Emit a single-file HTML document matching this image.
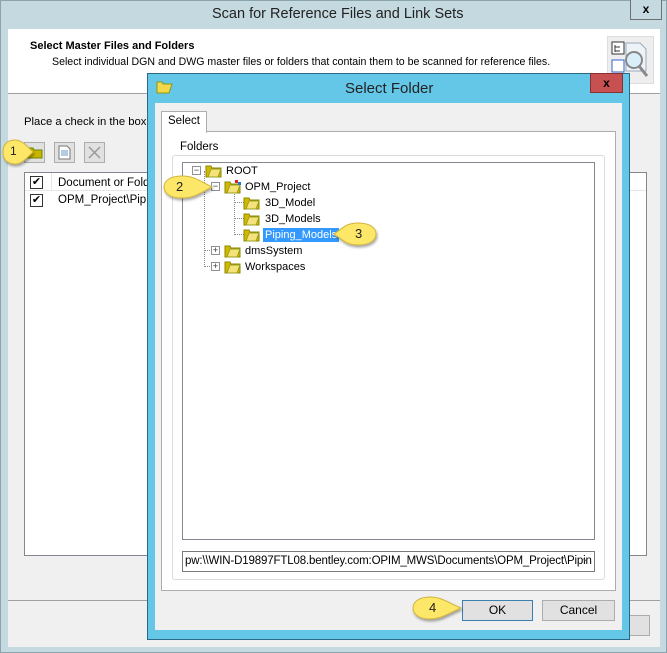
<!DOCTYPE html>
<html><head><style>
*{box-sizing:border-box;margin:0;padding:0}
body{width:667px;height:653px;position:relative;overflow:hidden;background:#c4d9e0;font-family:"Liberation Sans",sans-serif;font-size:11px;color:#000}
.a{position:absolute}
.t{white-space:nowrap}
.fold{position:absolute;width:17px;height:14px}
.exp{position:absolute;width:9px;height:9px;border:1px solid #919191;background:#fff;font-size:9px;line-height:7px;text-align:center;color:#333}
.btn{position:absolute;background:#e1e1e1;border:1px solid #adadad;text-align:center;font-size:12px;line-height:19px}
.tr{font-size:11px}
.cn{position:absolute;font-size:13px;color:#222}
</style></head><body>
<div class="a" style="left:0;top:0;width:667px;height:653px;border:1px solid #8aa3ad"></div>
<div class="a t" style="left:212px;top:6px;font-size:14.5px;color:#222">Scan for Reference Files and Link Sets</div>
<div class="a" style="left:630px;top:0;width:32px;height:20px;border:1px solid #707070;border-top:none;background:#c4d9e0;text-align:center;font-weight:bold;font-size:12px;line-height:18px">x</div>
<div class="a" style="left:8px;top:29px;width:652px;height:618px;background:#f0f0f0"></div>
<div class="a" style="left:8px;top:29px;width:652px;height:65px;background:#fff;border-bottom:1px solid #a0a0a0"></div>
<div class="a t" style="left:30px;top:40px;font-weight:bold;font-size:11px">Select Master Files and Folders</div>
<div class="a t" style="left:52px;top:56px;font-size:10.6px">Select individual DGN and DWG master files or folders that contain them to be scanned for reference files.</div>
<div class="a" style="left:607px;top:36px;width:47px;height:48px;background:#eee;border:1px solid #ddd"></div>
<svg class="a" style="left:609px;top:38px" width="44" height="44"><rect x="3" y="4" width="12" height="12" fill="#fff" stroke="#333"/><path d="M6 7v7M6 9h5M6 13h5" stroke="#333"/><rect x="3" y="22" width="12" height="12" fill="#fff" stroke="#36c"/><path d="M17 5h14l6 6v22h-20z" fill="#eef3f8" stroke="#9ab"/><circle cx="25" cy="22" r="8" fill="#d9eef8" stroke="#888" stroke-width="2"/><path d="M30 28l8 10" stroke="#888" stroke-width="3"/></svg>
<div class="a t" style="left:24px;top:116px;font-size:11.3px">Place a check in the box n</div>
<div class="a" style="left:24px;top:142px;width:21px;height:21px;border:1px solid #adadad;background:#e1e1e1"></div>
<svg class="a" style="left:27px;top:146px" width="16" height="13"><path d="M1 2h5l1 2h8v8H1z" fill="#c9b400" stroke="#6a8a00"/></svg>
<div class="a" style="left:54px;top:142px;width:21px;height:21px;border:1px solid #adadad;background:#e1e1e1"></div>
<svg class="a" style="left:58px;top:145px" width="14" height="15"><path d="M1 1h8l3 3v10H1z" fill="#fff" stroke="#777"/><path d="M3 6h7M3 8h7M3 10h7" stroke="#69c"/></svg>
<div class="a" style="left:84px;top:142px;width:21px;height:21px;border:1px solid #adadad;background:#e1e1e1"></div>
<svg class="a" style="left:87px;top:145px" width="15" height="15"><path d="M2 2l11 11M13 2L2 13" stroke="#999" stroke-width="1.5"/></svg>
<div class="a" style="left:24px;top:172px;width:623px;height:384px;background:#fff;border:1px solid #828790"></div>
<div class="a" style="left:25px;top:173px;width:621px;height:18px;border-bottom:1px solid #e5e5e5"></div>
<div class="a" style="left:51px;top:173px;width:1px;height:18px;background:#e5e5e5"></div>
<div class="a" style="left:30px;top:176px;width:13px;height:13px;border:1px solid #333;font-size:11px;line-height:10px;text-align:center">✔</div>
<div class="a" style="left:30px;top:194px;width:13px;height:13px;border:1px solid #333;font-size:11px;line-height:10px;text-align:center">✔</div>
<div class="a t" style="left:58px;top:177px;font-size:11.5px">Document or Folde</div>
<div class="a t" style="left:58px;top:194px;font-size:11.5px">OPM_Project\Pipin</div>
<div class="a" style="left:8px;top:600px;width:652px;height:1px;background:#a0a0a0"></div>
<div class="btn" style="left:600px;top:615px;width:50px;height:21px"></div>

<div class="a" style="left:147px;top:73px;width:483px;height:567px;background:#65c7e8;border:1px solid #2a6a86"></div>
<svg class="a" style="left:156px;top:80px" width="17" height="14"><path d="M1 2h5l1 2h9l-3 9H1z" fill="#f2d84a" stroke="#8a9a10"/></svg>
<div class="a t" style="left:345px;top:80px;font-size:15px;color:#222">Select Folder</div>
<div class="a" style="left:590px;top:73px;width:33px;height:20px;background:#c75050;border:1px solid #8a3030;text-align:center;font-weight:bold;font-size:12px;line-height:18px">x</div>
<div class="a" style="left:155px;top:103px;width:467px;height:527px;background:#f0f0f0"></div>
<div class="a" style="left:161px;top:131px;width:455px;height:460px;background:#fff;border:1px solid #adadad"></div>
<div class="a" style="left:161px;top:111px;width:46px;height:22px;background:#fff;border:1px solid #adadad;border-bottom:none"></div>
<div class="a t" style="left:168px;top:115px;font-size:11.5px">Select</div>
<div class="a" style="left:172px;top:155px;width:433px;height:425px;border:1px solid #dcdcdc;border-radius:3px"></div>
<div class="a t" style="left:177px;top:141px;font-size:11.5px;background:#fff;padding:0 3px">Folders</div>
<div class="a" style="left:182px;top:162px;width:413px;height:378px;background:#fff;border:1px solid #828790"></div>
<div class="a" style="left:204px;top:171px;border-left:1px dotted #888;height:96px"></div>
<div class="a" style="left:204px;top:266px;border-top:1px dotted #888;width:10px"></div>
<div class="a" style="left:204px;top:250px;border-top:1px dotted #888;width:10px"></div>
<div class="a" style="left:204px;top:186px;border-top:1px dotted #888;width:10px"></div>
<div class="a" style="left:234px;top:192px;border-left:1px dotted #888;height:43px"></div>
<div class="a" style="left:234px;top:202px;border-top:1px dotted #888;width:10px"></div>
<div class="a" style="left:234px;top:218px;border-top:1px dotted #888;width:10px"></div>
<div class="a" style="left:234px;top:234px;border-top:1px dotted #888;width:10px"></div>
<div class="exp" style="left:192px;top:166px">−</div>
<div class="exp" style="left:211px;top:182px">−</div>
<div class="exp" style="left:211px;top:246px">+</div>
<div class="exp" style="left:211px;top:262px">+</div>
<svg width="0" height="0" style="position:absolute"><defs><symbol id="f" viewBox="0 0 17 14"><path d="M1 2h5l1 2h9v9H1z" fill="#d4b800" stroke="#8a8a00"/><path d="M3 13l3-8h10l-3 8z" fill="#f5e27a" stroke="#9aa020"/></symbol></defs></svg>
<svg class="fold" style="left:205px;top:164px"><use href="#f"/></svg>
<svg class="fold" style="left:224px;top:180px"><use href="#f"/><rect x="11" y="0" width="3" height="3" fill="#d22"/><rect x="14" y="2" width="3" height="3" fill="#27c"/></svg>
<svg class="fold" style="left:243px;top:196px"><use href="#f"/></svg>
<svg class="fold" style="left:243px;top:212px"><use href="#f"/></svg>
<svg class="fold" style="left:243px;top:228px"><use href="#f"/></svg>
<svg class="fold" style="left:224px;top:244px"><use href="#f"/></svg>
<svg class="fold" style="left:224px;top:260px"><use href="#f"/></svg>
<div class="a t tr" style="left:226px;top:165px">ROOT</div>
<div class="a t tr" style="left:245px;top:181px">OPM_Project</div>
<div class="a t tr" style="left:265px;top:197px">3D_Model</div>
<div class="a t tr" style="left:265px;top:213px">3D_Models</div>
<div class="a t tr" style="left:263px;top:228px;background:#3399ff;color:#fff;padding:1px 2px">Piping_Models</div>
<div class="a t tr" style="left:245px;top:245px">dmsSystem</div>
<div class="a t tr" style="left:245px;top:261px">Workspaces</div>
<div class="a" style="left:182px;top:551px;width:413px;height:21px;background:#fff;border:1px solid #7a7a7a"></div>
<div class="a t" style="left:185px;top:555px;font-size:11.5px;letter-spacing:-0.15px">pw:\\WIN-D19897FTL08.bentley.com:OPIM_MWS\Documents\OPM_Project\Pipin</div>
<div class="a" style="left:581px;top:553px;font-size:10px;color:#555">⌄</div>
<div class="btn" style="left:462px;top:600px;width:71px;height:21px;border-color:#3c7fb1">OK</div>
<div class="btn" style="left:542px;top:600px;width:73px;height:21px">Cancel</div>

<svg class="a" style="left:0;top:0" width="667" height="653">
<defs><filter id="s"><feDropShadow dx="1" dy="2" stdDeviation="1.2" flood-opacity=".35"/></filter></defs>
<g fill="#fde767" stroke="#d2b43a" filter="url(#s)">
<path d="M15 140c-8 0-12 5-12 12s4 12 12 12c6 0 10-4 18-12c-8-8-12-12-18-12z"/>
<path d="M182 176c-12 0-18 5-18 11s6 11 18 11c12 0 18-5 30-11c-12-6-18-11-30-11z"/>
<path d="M358 223c12 0 18 5 18 11s-6 11-18 11c-12 0-15-5-24-11c9-6 12-11 24-11z"/>
<path d="M430 597c-11 0-17 5-17 11s6 11 17 11c11 0 17-5 31-11c-14-6-20-11-31-11z"/>
</g></svg>
<div class="cn" style="left:10px;top:144px;font-size:12px">1</div>
<div class="cn" style="left:176px;top:179px">2</div>
<div class="cn" style="left:355px;top:226px">3</div>
<div class="cn" style="left:429px;top:600px">4</div>
</body></html>
